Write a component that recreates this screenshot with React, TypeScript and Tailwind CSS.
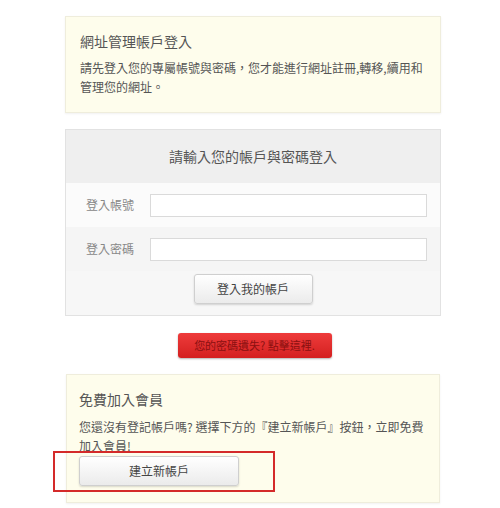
import React from "react";

const font = { fontFamily: '"Noto Sans CJK TC", "Noto Sans", sans-serif' };

export default function App() {
  return (
    <div className="relative w-[500px] h-[508px] bg-white text-[#555]" style={font}>
      <div className="pt-[16px] pl-[65px] w-[441px] flex flex-col">
        {/* top info box */}
        <div className="h-[97px] bg-[#fefdec] border border-[#efeddc] shadow-[0_1px_2px_rgba(0,0,0,0.06)] px-[14px] pt-[14px]">
          <div className="text-[14px] leading-[20px] text-[#555]">網址管理帳戶登入</div>
          <div className="mt-[7px] text-[12px] leading-[19px] text-[#555]">
            請先登入您的專屬帳號與密碼，您才能進行網址註冊,轉移,續用和管理您的網址。
          </div>
        </div>

        {/* login box */}
        <div className="mt-[16px] h-[187px] border border-[#e2e2e2] bg-[#f6f6f6] flex flex-col">
          <div className="h-[53px] bg-[#efefef] flex items-center justify-center text-[14px] text-[#555]">
            請輸入您的帳戶與密碼登入
          </div>
          <div className="h-[44px] bg-[#fbfbfb] flex items-center pl-[20px] pr-[13px]">
            <span className="w-[64px] text-[12px] text-[#888]">登入帳號</span>
            <div className="flex-1 h-[23px] bg-white border border-[#dadada]" />
          </div>
          <div className="h-[44px] bg-[#f5f5f5] flex items-center pl-[20px] pr-[13px]">
            <span className="w-[64px] text-[12px] text-[#888]">登入密碼</span>
            <div className="flex-1 h-[23px] bg-white border border-[#dadada]" />
          </div>
          <div className="flex-1 bg-[#f7f7f7] flex justify-center pt-[3px]">
            <div className="w-[119px] h-[30px] rounded-[3px] border border-[#cfcfcf] bg-gradient-to-b from-white to-[#ebebeb] shadow-[0_1px_2px_rgba(0,0,0,0.15)] flex items-center justify-center text-[12px] text-[#444]">
              登入我的帳戶
            </div>
          </div>
        </div>

        {/* red link */}
        <div className="mt-[17px] flex justify-center pl-[3px]">
          <div className="w-[154px] h-[25px] rounded-[3px] bg-gradient-to-b from-[#ee3b3b] to-[#d41f1f] shadow-[0_1px_2px_rgba(0,0,0,0.3)] flex items-center justify-center text-[11px] text-[#8a1010]">
            您的密碼遺失? 點擊這裡.
          </div>
        </div>

        {/* bottom box */}
        <div className="mt-[16px] ml-[1px] w-[374px] h-[129px] bg-[#fefdec] border border-[#efeddc] shadow-[0_1px_2px_rgba(0,0,0,0.06)] px-[12px] pt-[14px]">
          <div className="text-[14px] leading-[20px] text-[#555]">免費加入會員</div>
          <div className="mt-[8px] text-[12px] leading-[19px] text-[#555]">
            您還沒有登記帳戶嗎? 選擇下方的『建立新帳戶』按鈕，立即免費加入會員!
          </div>
          <div className="mt-[1px] w-[160px] h-[30px] rounded-[3px] border border-[#cfcfcf] bg-gradient-to-b from-white to-[#ebebeb] shadow-[0_1px_2px_rgba(0,0,0,0.15)] flex items-center justify-center text-[12px] text-[#444]">
            建立新帳戶
          </div>
        </div>
      </div>

      {/* red highlight rectangle */}
      <div className="absolute left-[53px] top-[451px] w-[222px] h-[41px] border-2 border-[#d42a2a]" />
    </div>
  );
}
